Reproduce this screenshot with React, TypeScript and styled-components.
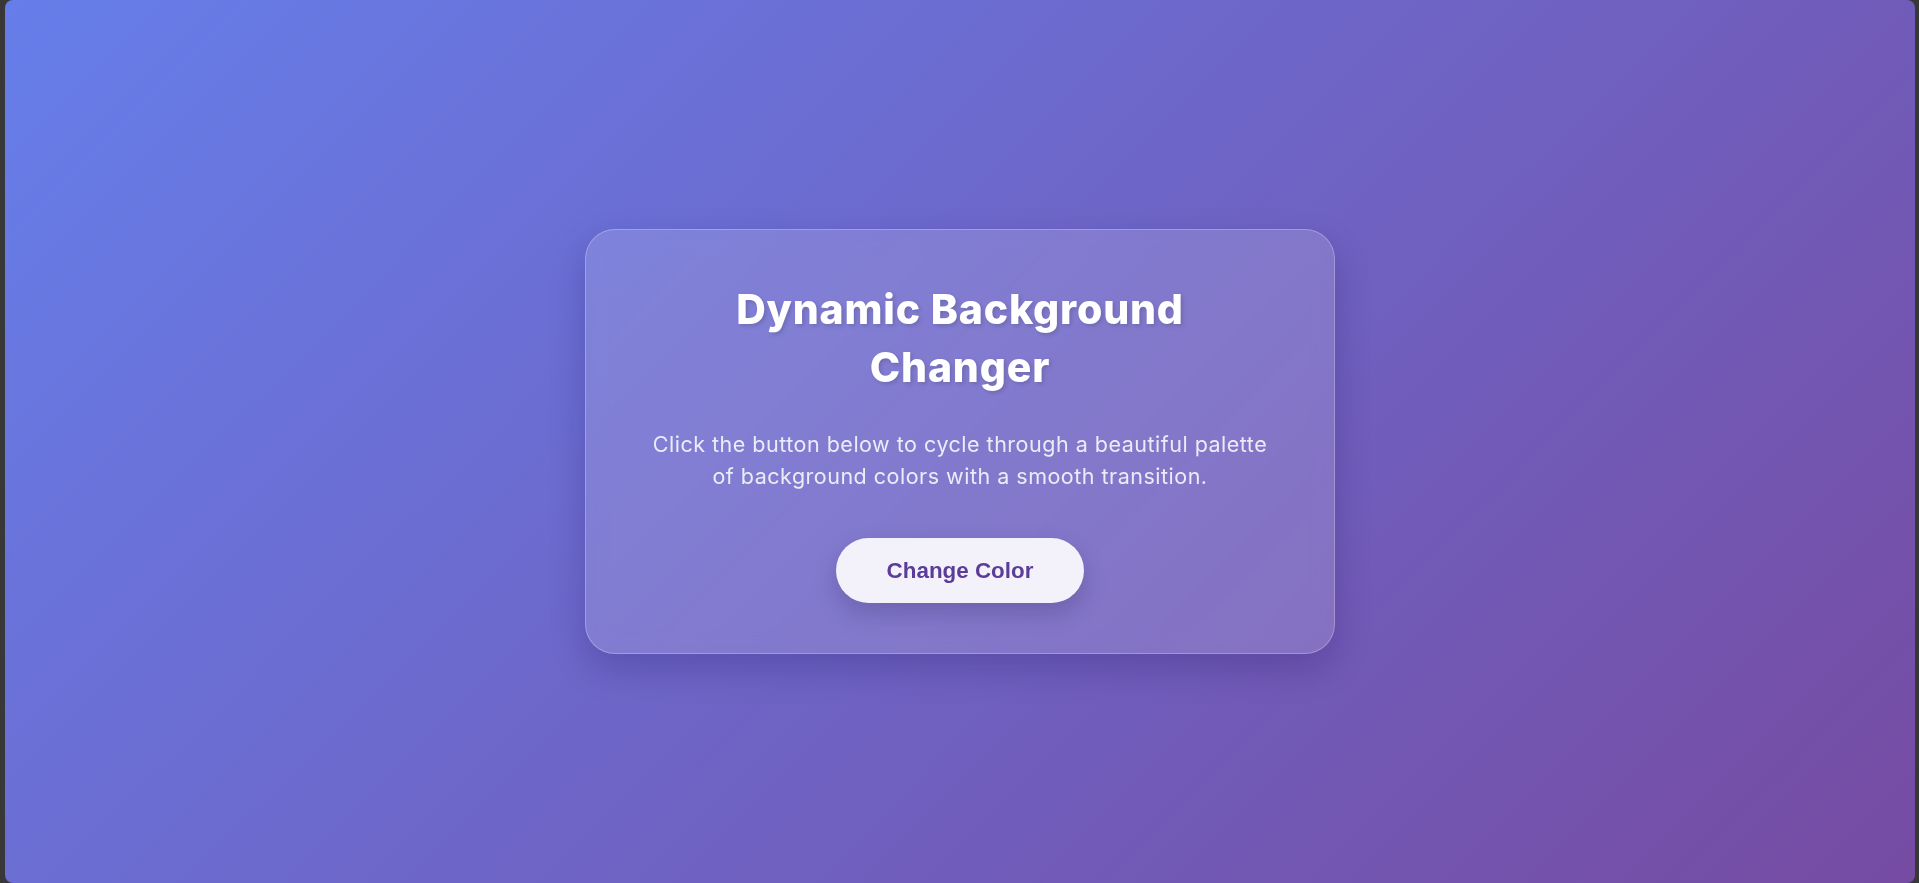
import React, { useState } from "react";
import styled, { createGlobalStyle } from "styled-components";

const GlobalStyle = createGlobalStyle`
  *, *::before, *::after { box-sizing: border-box; }
  html, body { margin: 0; padding: 0; height: 100%; }
  body {
    background: #383838;
    font-family: Inter, "Open Sans", sans-serif;
    overflow: hidden;
  }
`;

const palette = [
  "linear-gradient(135deg, #667eea 0%, #764ba2 100%)",
  "linear-gradient(135deg, #f093fb 0%, #f5576c 100%)",
  "linear-gradient(135deg, #4facfe 0%, #00f2fe 100%)",
  "linear-gradient(135deg, #43e97b 0%, #38f9d7 100%)",
  "linear-gradient(135deg, #fa709a 0%, #fee140 100%)",
];

const Frame = styled.div`
  height: 100vh;
  padding: 0 4px 0 5px;
`;

const Stage = styled.main<{ $bg: string }>`
  height: 100%;
  border-radius: 8px;
  background: ${(p) => p.$bg};
  transition: background 0.8s ease;
  display: flex;
  align-items: center;
  justify-content: center;
`;

const Card = styled.section`
  width: 750px;
  padding: 50px 56px;
  border-radius: 30px;
  background: rgba(255, 255, 255, 0.14);
  border: 1px solid rgba(255, 255, 255, 0.25);
  backdrop-filter: blur(10px);
  box-shadow: 0 15px 35px rgba(20, 10, 80, 0.22);
  display: flex;
  flex-direction: column;
  align-items: center;
  text-align: center;
`;

const Title = styled.h1`
  margin: 0 0 31px;
  max-width: 520px;
  font-size: 41px;
  line-height: 58.5px;
  font-weight: 800;
  letter-spacing: 0.8px;
  color: #ffffff;
  text-shadow: 2px 2px 4px rgba(0, 0, 0, 0.15);
`;

const Text = styled.p`
  margin: 0 0 46px;
  max-width: 632px;
  font-size: 21.5px;
  line-height: 32.3px;
  letter-spacing: 0.5px;
  font-weight: 400;
  color: rgba(255, 255, 255, 0.85);
`;

const Button = styled.button`
  border: none;
  border-radius: 999px;
  padding: 19.5px 51px;
  background: #f3f1fa;
  color: #5b3c99;
  font-family: "Liberation Sans", Arial, sans-serif;
  font-weight: 700;
  font-size: 22.4px;
  line-height: 26px;
  cursor: pointer;
  box-shadow: 0 10px 25px rgba(20, 10, 60, 0.2);
`;

export default function App() {
  const [idx, setIdx] = useState(0);
  return (
    <>
      <GlobalStyle />
      <Frame>
        <Stage $bg={palette[idx]}>
          <Card>
            <Title>Dynamic Background Changer</Title>
            <Text>
              Click the button below to cycle through a beautiful palette of background colors with a smooth transition.
            </Text>
            <Button onClick={() => setIdx((i) => (i + 1) % palette.length)}>Change Color</Button>
          </Card>
        </Stage>
      </Frame>
    </>
  );
}
